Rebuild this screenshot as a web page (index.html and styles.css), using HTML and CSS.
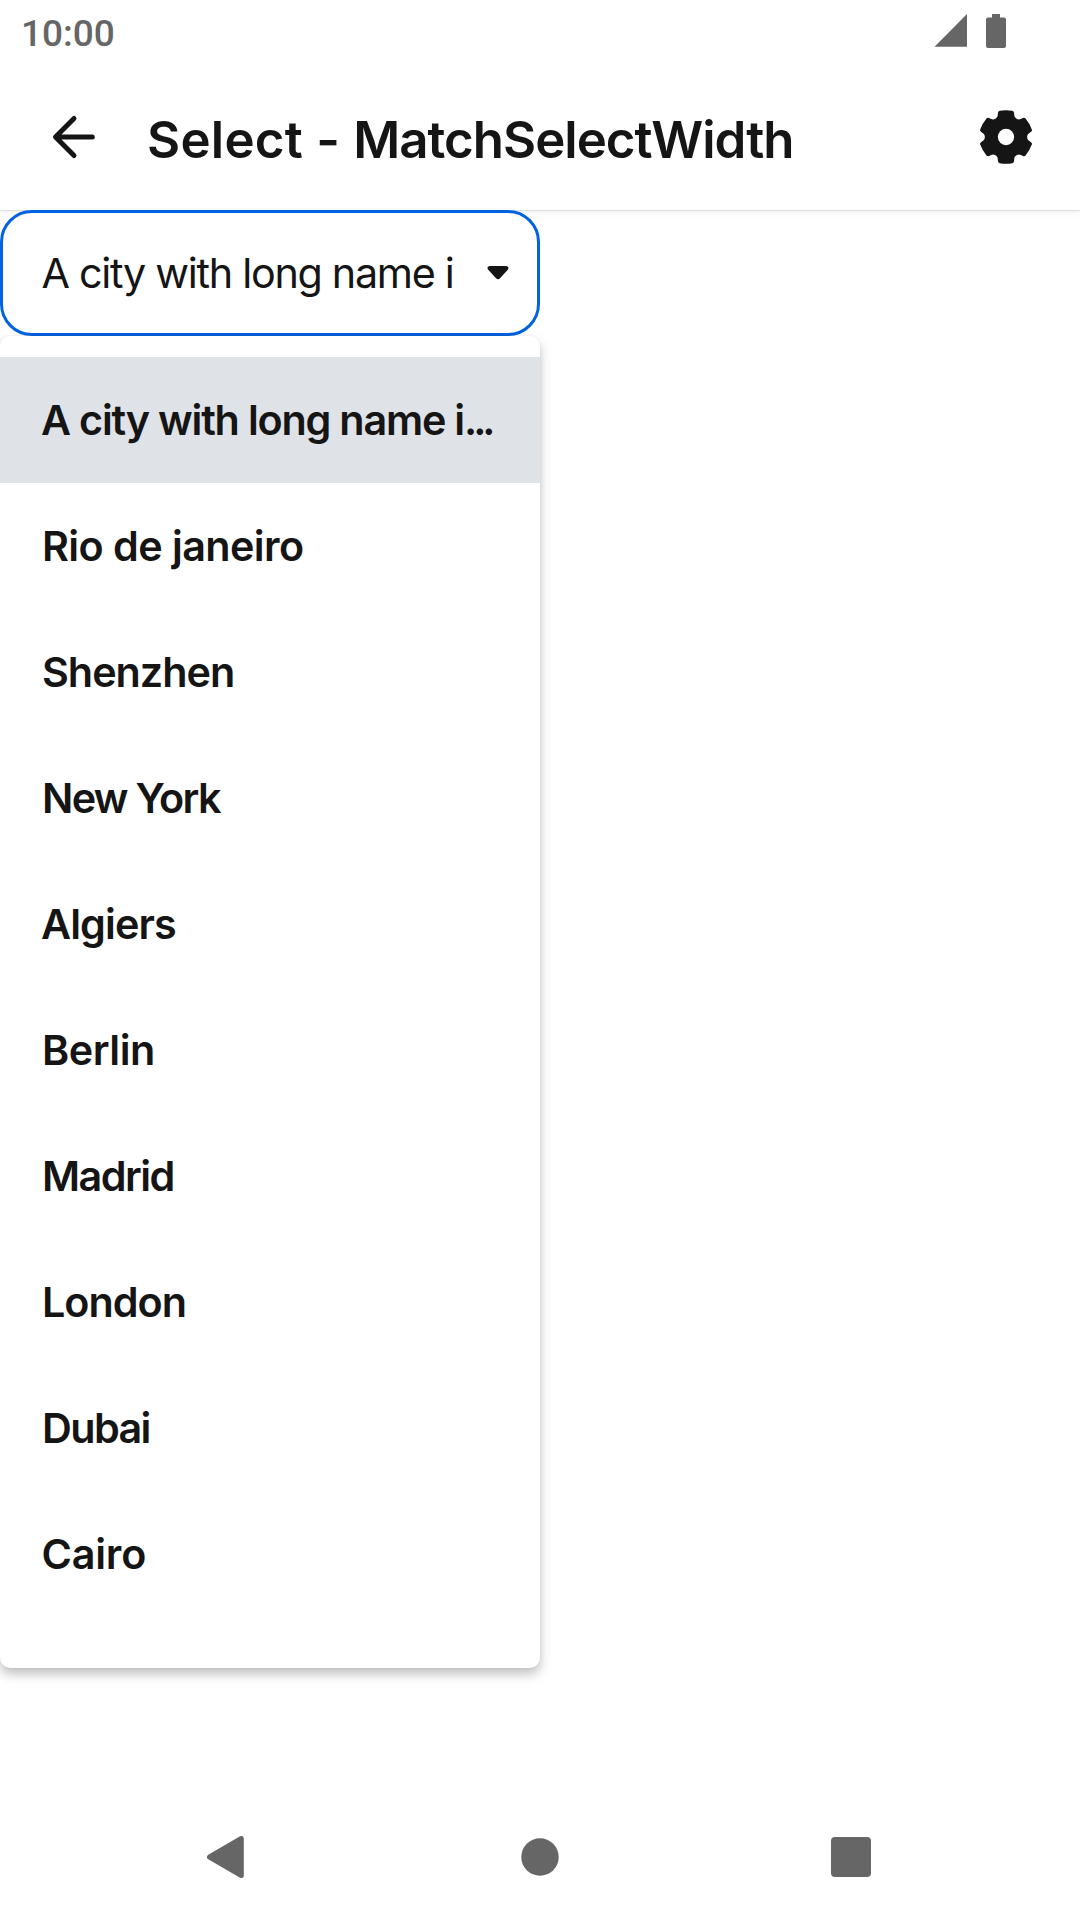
FILE: index.html
```
<!DOCTYPE html>
<html lang="en">
<head>
<meta charset="utf-8">
<title>Select - MatchSelectWidth</title>
<link rel="stylesheet" href="styles.css">
</head>
<body>
<div class="screen">
  <header class="top">
    <div class="status">
      <span class="clock">10:00</span>
      <svg class="status-icons" width="80" height="40" viewBox="0 0 80 40" fill="#666">
        <path d="M4.500 36.700L37 4V36.700Z"/>
        <path d="M62 4h8v3.500h4a2 2 0 0 1 2 2V36a2 2 0 0 1-2 2H58a2 2 0 0 1-2-2V9.500a2 2 0 0 1 2-2h4Z"/>
      </svg>
    </div>
    <div class="bar">
      <svg class="back" width="48" height="48" viewBox="0 0 48 48" fill="none" stroke="#151515" stroke-width="5" stroke-linecap="round" stroke-linejoin="round">
        <path d="M42.300 24H6M24 5.500L5.500 24L24 42.500"/>
      </svg>
      <h1 class="title">Select - <span class="title-name">MatchSelectWidth</span></h1>
      <svg class="gear" width="56" height="56" viewBox="-27.500 -27.500 55 55" fill="#151515">
        <defs>
          <path id="tooth" d="M0 0L-10.400-18C-8.700-19-8.200-20-8.100-21.500L-7.900-23.800Q-7.700-25.400-6.200-25.700Q0-26.800 6.200-25.700Q7.700-25.400 7.900-23.800L8.100-21.500C8.200-20 8.700-19 10.400-18Z"/>
        </defs>
        <use href="#tooth"/>
        <use href="#tooth" transform="rotate(60)"/>
        <use href="#tooth" transform="rotate(120)"/>
        <use href="#tooth" transform="rotate(180)"/>
        <use href="#tooth" transform="rotate(240)"/>
        <use href="#tooth" transform="rotate(300)"/>
        <circle r="20.300"/>
        <circle r="8" fill="#fff"/>
      </svg>
    </div>
  </header>
  <main class="content">
    <div class="select">
      <span class="value">A city with long name in</span>
      <svg class="caret" width="22" height="16" viewBox="0 0 22 16" fill="#151515">
        <path d="M3 1H19C21.500 1 22.200 3.300 20.800 4.800L13 13.200Q11 15.200 9 13.200L1.200 4.800C-.2 3.300.5 1 3 1Z"/>
      </svg>
    </div>
    <ul class="menu">
      <li class="item selected city-long">A city with long name i<span class="dots">...</span></li>
      <li class="item rio">Rio de janeiro</li>
      <li class="item shenzhen">Shenzhen</li>
      <li class="item new-york">New York</li>
      <li class="item algiers">Algiers</li>
      <li class="item berlin">Berlin</li>
      <li class="item madrid">Madrid</li>
      <li class="item london">London</li>
      <li class="item dubai">Dubai</li>
      <li class="item cairo">Cairo</li>
    </ul>
  </main>
  <nav class="nav">
    <svg width="40" height="44" viewBox="0 0 40 44" fill="#666" stroke="#666" stroke-width="5" stroke-linejoin="round">
      <path d="M4.500 22L36.300 3.500V40.500Z"/>
    </svg>
    <svg class="home" width="38" height="38" viewBox="0 0 38 38" fill="#666"><circle cx="19" cy="19" r="18.700"/></svg>
    <svg width="40" height="40" viewBox="0 0 40 40" fill="#666"><rect width="40" height="40" rx="4"/></svg>
  </nav>
</div>
</body>
</html>
```
FILE: styles.css
```
* { box-sizing: border-box; }
body { margin: 0; background: #fff; color: #151515; font-family: "Inter", "Liberation Sans", sans-serif; }
.screen { width: 1080px; height: 1920px; display: flex; flex-direction: column; overflow: hidden; }

.top { height: 210px; background: #fff; box-shadow: 0 1px 1px rgba(0, 0, 0, .09), 0 3px 7px rgba(0, 0, 0, .05); }
.status { height: 63px; padding: 10px 70px 0 21px; display: flex; justify-content: space-between; }
.clock { font: 500 37px/48px "Roboto", sans-serif; color: #666; }
.bar { height: 147px; padding: 0 46px 0 50px; display: flex; align-items: center; }
.back { flex: none; }
.title { flex: 1; margin: 6px 0 0 49px; font-size: 51px; font-weight: 600; line-height: 60px; letter-spacing: .25px; white-space: nowrap; }
.title-name { letter-spacing: -1px; }
.gear { flex: none; }

.content { flex: 1; }
.select { width: 540px; height: 126px; padding: 0 28px 0 38.500px; display: flex; align-items: center; justify-content: space-between; background: #fff; border: 3px solid #0062e0; border-radius: 32px; }
.value { width: 414px; overflow: hidden; white-space: nowrap; font-size: 41.300px; line-height: 61px; letter-spacing: -1.290px; }
.caret { flex: none; }

.menu { width: 540px; height: 1332px; margin: 0; padding: 21px 0 0; list-style: none; background: #fff; border-radius: 10px; box-shadow: 0 6px 12px rgba(0, 0, 0, .25), 0 0 3px rgba(0, 0, 0, .06); }
.item { height: 126px; padding-left: 42px; font-size: 41.300px; font-weight: 600; line-height: 127px; white-space: nowrap; }
.selected { background: #dfe2e7; }
.city-long { padding-left: 41px; letter-spacing: -1.200px; }
.dots { letter-spacing: -4px; }
.rio { letter-spacing: -.57px; }
.shenzhen { letter-spacing: -1px; }
.new-york { letter-spacing: -1.700px; }
.algiers { padding-left: 41px; letter-spacing: -.88px; }
.berlin { letter-spacing: -.46px; }
.madrid { letter-spacing: -1.550px; }
.london { letter-spacing: -1px; }
.dubai { letter-spacing: -1.600px; }
.cairo { padding-left: 41.500px; letter-spacing: -.2px; }

.nav { height: 126px; padding: 0 209px 0 205px; display: flex; align-items: center; justify-content: space-between; }
.home { margin-left: 3px; }
```
